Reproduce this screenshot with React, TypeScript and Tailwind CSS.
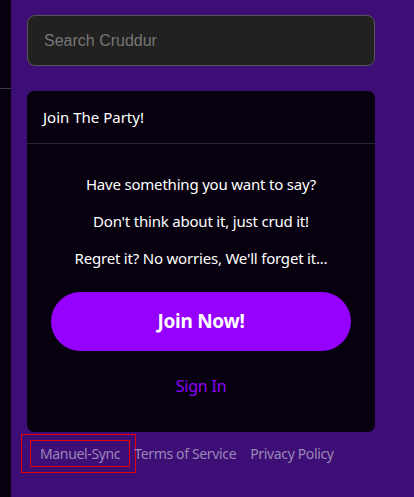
export default function App() {
  return (
    <div className="flex h-[497px] w-[414px] overflow-hidden bg-[#3d0e75] font-['Noto_Sans',sans-serif]">
      <div className="w-[11px] shrink-0 bg-[#07010f]">
        <div className="h-[89px] border-b border-[#3a3a48]" />
      </div>

      <div className="ml-[16px] w-[348px] pt-[15px]">
        <input
          type="text"
          placeholder="Search Cruddur"
          className="h-[51px] w-full rounded-[8px] border border-[#555] bg-[#212121] px-[16px] font-['Liberation_Sans',sans-serif] text-[16px] text-white placeholder:text-[#777] outline-none"
        />

        <div className="mt-[25px] rounded-[7px] bg-[#07010f]">
          <div className="flex h-[53px] items-center border-b border-[#262633] px-[16px] text-[15px] text-white">
            Join The Party!
          </div>
          <div className="flex flex-col items-center pt-[22px] pb-[34px] text-[15px] tracking-[-0.2px] text-white">
            <p className="leading-[37px]">Have something you want to say?</p>
            <p className="leading-[37px]">Don't think about it, just crud it!</p>
            <p className="leading-[37px]">Regret it? No worries, We'll forget it...</p>
            <button className="mt-[15px] h-[59px] w-[300px] rounded-full bg-[#9500ff] text-[19px] font-bold tracking-[-0.3px] text-white">
              Join Now!
            </button>
            <a className="mt-[23px] text-[16px] leading-[24px] text-[#8f00ff]">Sign In</a>
          </div>
        </div>

        <div className="mt-[2px] flex items-center text-[14px] tracking-[-0.35px] text-[#9a86b8]">
          <div className="-ml-[6px] border border-solid border-red-600 py-[5px] pl-[8px] pr-[5px]">
            <div className="border border-solid border-red-600 px-[9px] py-[2px]">Manuel-Sync</div>
          </div>
          <span className="-ml-[2px]">Terms of Service</span>
          <span className="ml-[14px]">Privacy Policy</span>
        </div>
      </div>
    </div>
  );
}
